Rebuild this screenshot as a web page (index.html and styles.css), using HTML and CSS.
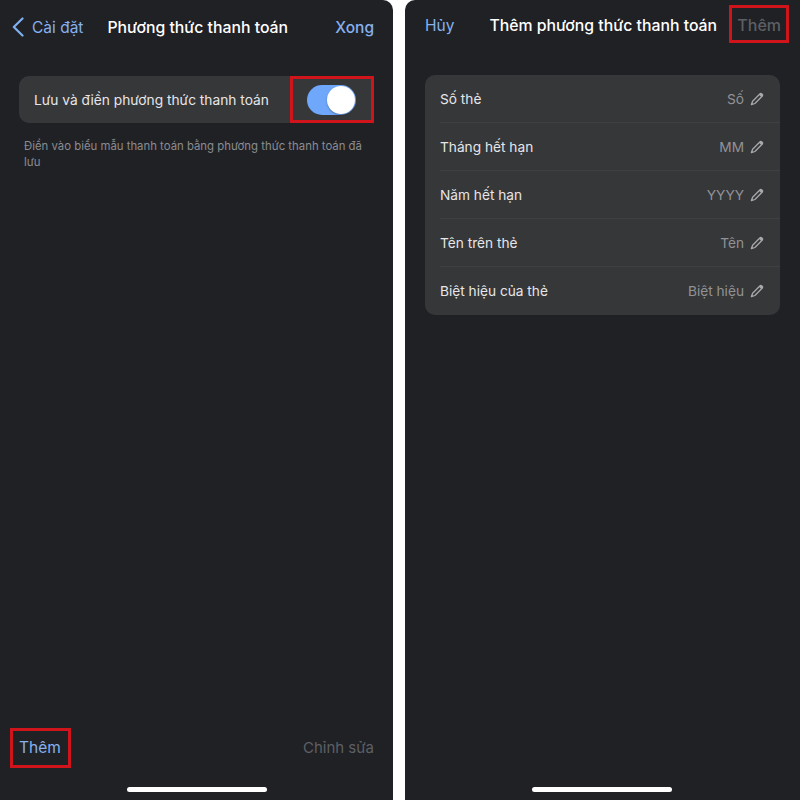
FILE: index.html
```html
<!DOCTYPE html>
<html lang="vi">
<head>
<meta charset="utf-8">
<title>Phương thức thanh toán</title>
<link rel="stylesheet" href="styles.css">
</head>
<body>
<main class="stage">
  <section class="panel panel-left">
    <header class="nav nav-left">
      <div class="back link">
        <svg class="chevron" viewBox="0 0 12 20" aria-hidden="true"><path d="M10.500 1.500 1.800 10 10.500 18.500"/></svg>
        <span>Cài đặt</span>
      </div>
      <h1 class="title">Phương thức thanh toán</h1>
      <span class="link done">Xong</span>
    </header>
    <div class="setting">
      <span>Lưu và điền phương thức thanh toán</span>
      <div class="toggle"><div class="knob"></div></div>
      <div class="mark mark-toggle"></div>
    </div>
    <p class="hint">Điền vào biểu mẫu thanh toán bằng phương thức thanh toán đã lưu</p>
    <footer class="toolbar">
      <span class="link add">Thêm<span class="mark mark-add"></span></span>
      <span class="muted edit">Chỉnh sửa</span>
    </footer>
    <div class="home"></div>
  </section>

  <section class="panel panel-right">
    <header class="nav nav-right">
      <span class="link cancel">Hủy</span>
      <h1 class="title">Thêm phương thức thanh toán</h1>
      <span class="muted add-top">Thêm<span class="mark mark-top"></span></span>
    </header>
    <div class="form">
      <div class="row"><span>Số thẻ</span><span class="value">Số<svg class="pencil" viewBox="0 0 14 14" aria-hidden="true"><path d="M2.600 9.200 9.800 2a1.500 1.500 0 0 1 2.100 0l.2.200a1.500 1.500 0 0 1 0 2.100L4.900 11.500 1.400 12.700z"/><path class="fill" d="M9 2.800 11.300 5.100l.8-.8a1.500 1.500 0 0 0 0-2.100l-.2-.2a1.500 1.500 0 0 0-2.100 0z"/></svg></span></div>
      <div class="row"><span>Tháng hết hạn</span><span class="value">MM<svg class="pencil" viewBox="0 0 14 14" aria-hidden="true"><path d="M2.600 9.200 9.800 2a1.500 1.500 0 0 1 2.100 0l.2.200a1.500 1.500 0 0 1 0 2.100L4.900 11.500 1.400 12.700z"/><path class="fill" d="M9 2.800 11.300 5.100l.8-.8a1.500 1.500 0 0 0 0-2.100l-.2-.2a1.500 1.500 0 0 0-2.100 0z"/></svg></span></div>
      <div class="row"><span>Năm hết hạn</span><span class="value">YYYY<svg class="pencil" viewBox="0 0 14 14" aria-hidden="true"><path d="M2.600 9.200 9.800 2a1.500 1.500 0 0 1 2.100 0l.2.200a1.500 1.500 0 0 1 0 2.100L4.900 11.500 1.400 12.700z"/><path class="fill" d="M9 2.800 11.300 5.100l.8-.8a1.500 1.500 0 0 0 0-2.100l-.2-.2a1.500 1.500 0 0 0-2.100 0z"/></svg></span></div>
      <div class="row"><span>Tên trên thẻ</span><span class="value">Tên<svg class="pencil" viewBox="0 0 14 14" aria-hidden="true"><path d="M2.600 9.200 9.800 2a1.500 1.500 0 0 1 2.100 0l.2.200a1.500 1.500 0 0 1 0 2.100L4.900 11.500 1.400 12.700z"/><path class="fill" d="M9 2.800 11.300 5.100l.8-.8a1.500 1.500 0 0 0 0-2.100l-.2-.2a1.500 1.500 0 0 0-2.100 0z"/></svg></span></div>
      <div class="row"><span>Biệt hiệu của thẻ</span><span class="value">Biệt hiệu<svg class="pencil" viewBox="0 0 14 14" aria-hidden="true"><path d="M2.600 9.200 9.800 2a1.500 1.500 0 0 1 2.100 0l.2.200a1.500 1.500 0 0 1 0 2.100L4.900 11.500 1.400 12.700z"/><path class="fill" d="M9 2.800 11.300 5.100l.8-.8a1.500 1.500 0 0 0 0-2.100l-.2-.2a1.500 1.500 0 0 0-2.100 0z"/></svg></span></div>
    </div>
    <div class="home"></div>
  </section>
</main>
</body>
</html>
```
FILE: styles.css
```css
* { box-sizing: border-box; margin: 0; padding: 0; }
html, body { width: 800px; height: 800px; overflow: hidden; background: #fff; }
body { font-family: Inter, "Noto Sans", sans-serif; font-size: 14px; color: #e6e6e8; }
.stage { display: flex; justify-content: space-between; width: 800px; height: 800px; }
.panel { position: relative; display: flex; flex-direction: column; height: 800px; background: #202125; }
.panel-left { width: 393px; border-radius: 0 10px 0 0; padding: 0 19px; }
.panel-right { width: 395px; border-radius: 10px 0 0 0; padding: 0 20px; }

.nav { display: flex; align-items: center; font-size: 15.5px; }
.nav-left { height: 54px; margin-bottom: 22px; }
.nav-right { height: 50px; margin-bottom: 25px; margin-right: -1px; }
.title { font-size: 15.8px; font-weight: 500; color: #fff; white-space: nowrap; margin-right: auto; }
.nav-left .title { margin-left: 24px; }
.nav-right .title { margin-left: 35px; }
.link { color: #86b1ee; }
.muted { color: #5d5f64; }
.back { display: flex; align-items: center; gap: 8px; margin-left: -7px; }
.chevron { width: 12px; height: 20px; fill: none; stroke: #7fb0ef; stroke-width: 2.200; stroke-linecap: round; stroke-linejoin: round; }
.done { font-weight: 500; }
.add-top { font-size: 16px; font-weight: 500; }

.setting { position: relative; display: flex; align-items: center; justify-content: space-between; height: 47px; padding: 0 18px 0 15px; background: #363739; border-radius: 10px; font-size: 13.75px; color: #e6e6e8; }
.toggle { display: flex; justify-content: flex-end; align-items: center; width: 49px; height: 30px; padding: 1px; background: #6fa8fb; border-radius: 15px; }
.knob { width: 28px; height: 28px; background: #fff; border-radius: 50%; box-shadow: 0 1px 2px rgba(0,0,0,.3); }
.hint { margin-top: 15px; padding: 0 5px; font-size: 11.36px; line-height: 16px; color: #8b8c90; }

.toolbar { display: flex; align-items: center; justify-content: space-between; margin-top: auto; margin-bottom: 43px; font-size: 15.5px; }
.edit { font-size: 15px; }
.add, .add-top { position: relative; }
.home { position: absolute; bottom: 8px; left: 127px; width: 140px; height: 5px; background: #fff; border-radius: 3px; }

.form { background: #363739; border-radius: 10px; padding-left: 15px; height: 240px; }
.row { display: flex; align-items: center; justify-content: space-between; height: 48px; padding-right: 16px; font-size: 13.7px; border-bottom: 1px solid #3f4042; }
.row:last-child { border-bottom: 0; }
.value { display: flex; align-items: center; gap: 6px; color: #919296; }
.pencil { width: 14px; height: 14px; fill: none; stroke: #a8a9ad; stroke-width: 1.300; stroke-linejoin: round; }
.pencil .fill { fill: #a8a9ad; stroke: none; }

.mark { position: absolute; border: 3px solid #d0141c; pointer-events: none; }
.mark-toggle { right: 0; top: 0; width: 84px; height: 47px; }
.mark-add { left: -9px; top: -10px; width: 61px; height: 40px; }
.mark-top { left: -8px; top: -10px; width: 60px; height: 38px; }
```
